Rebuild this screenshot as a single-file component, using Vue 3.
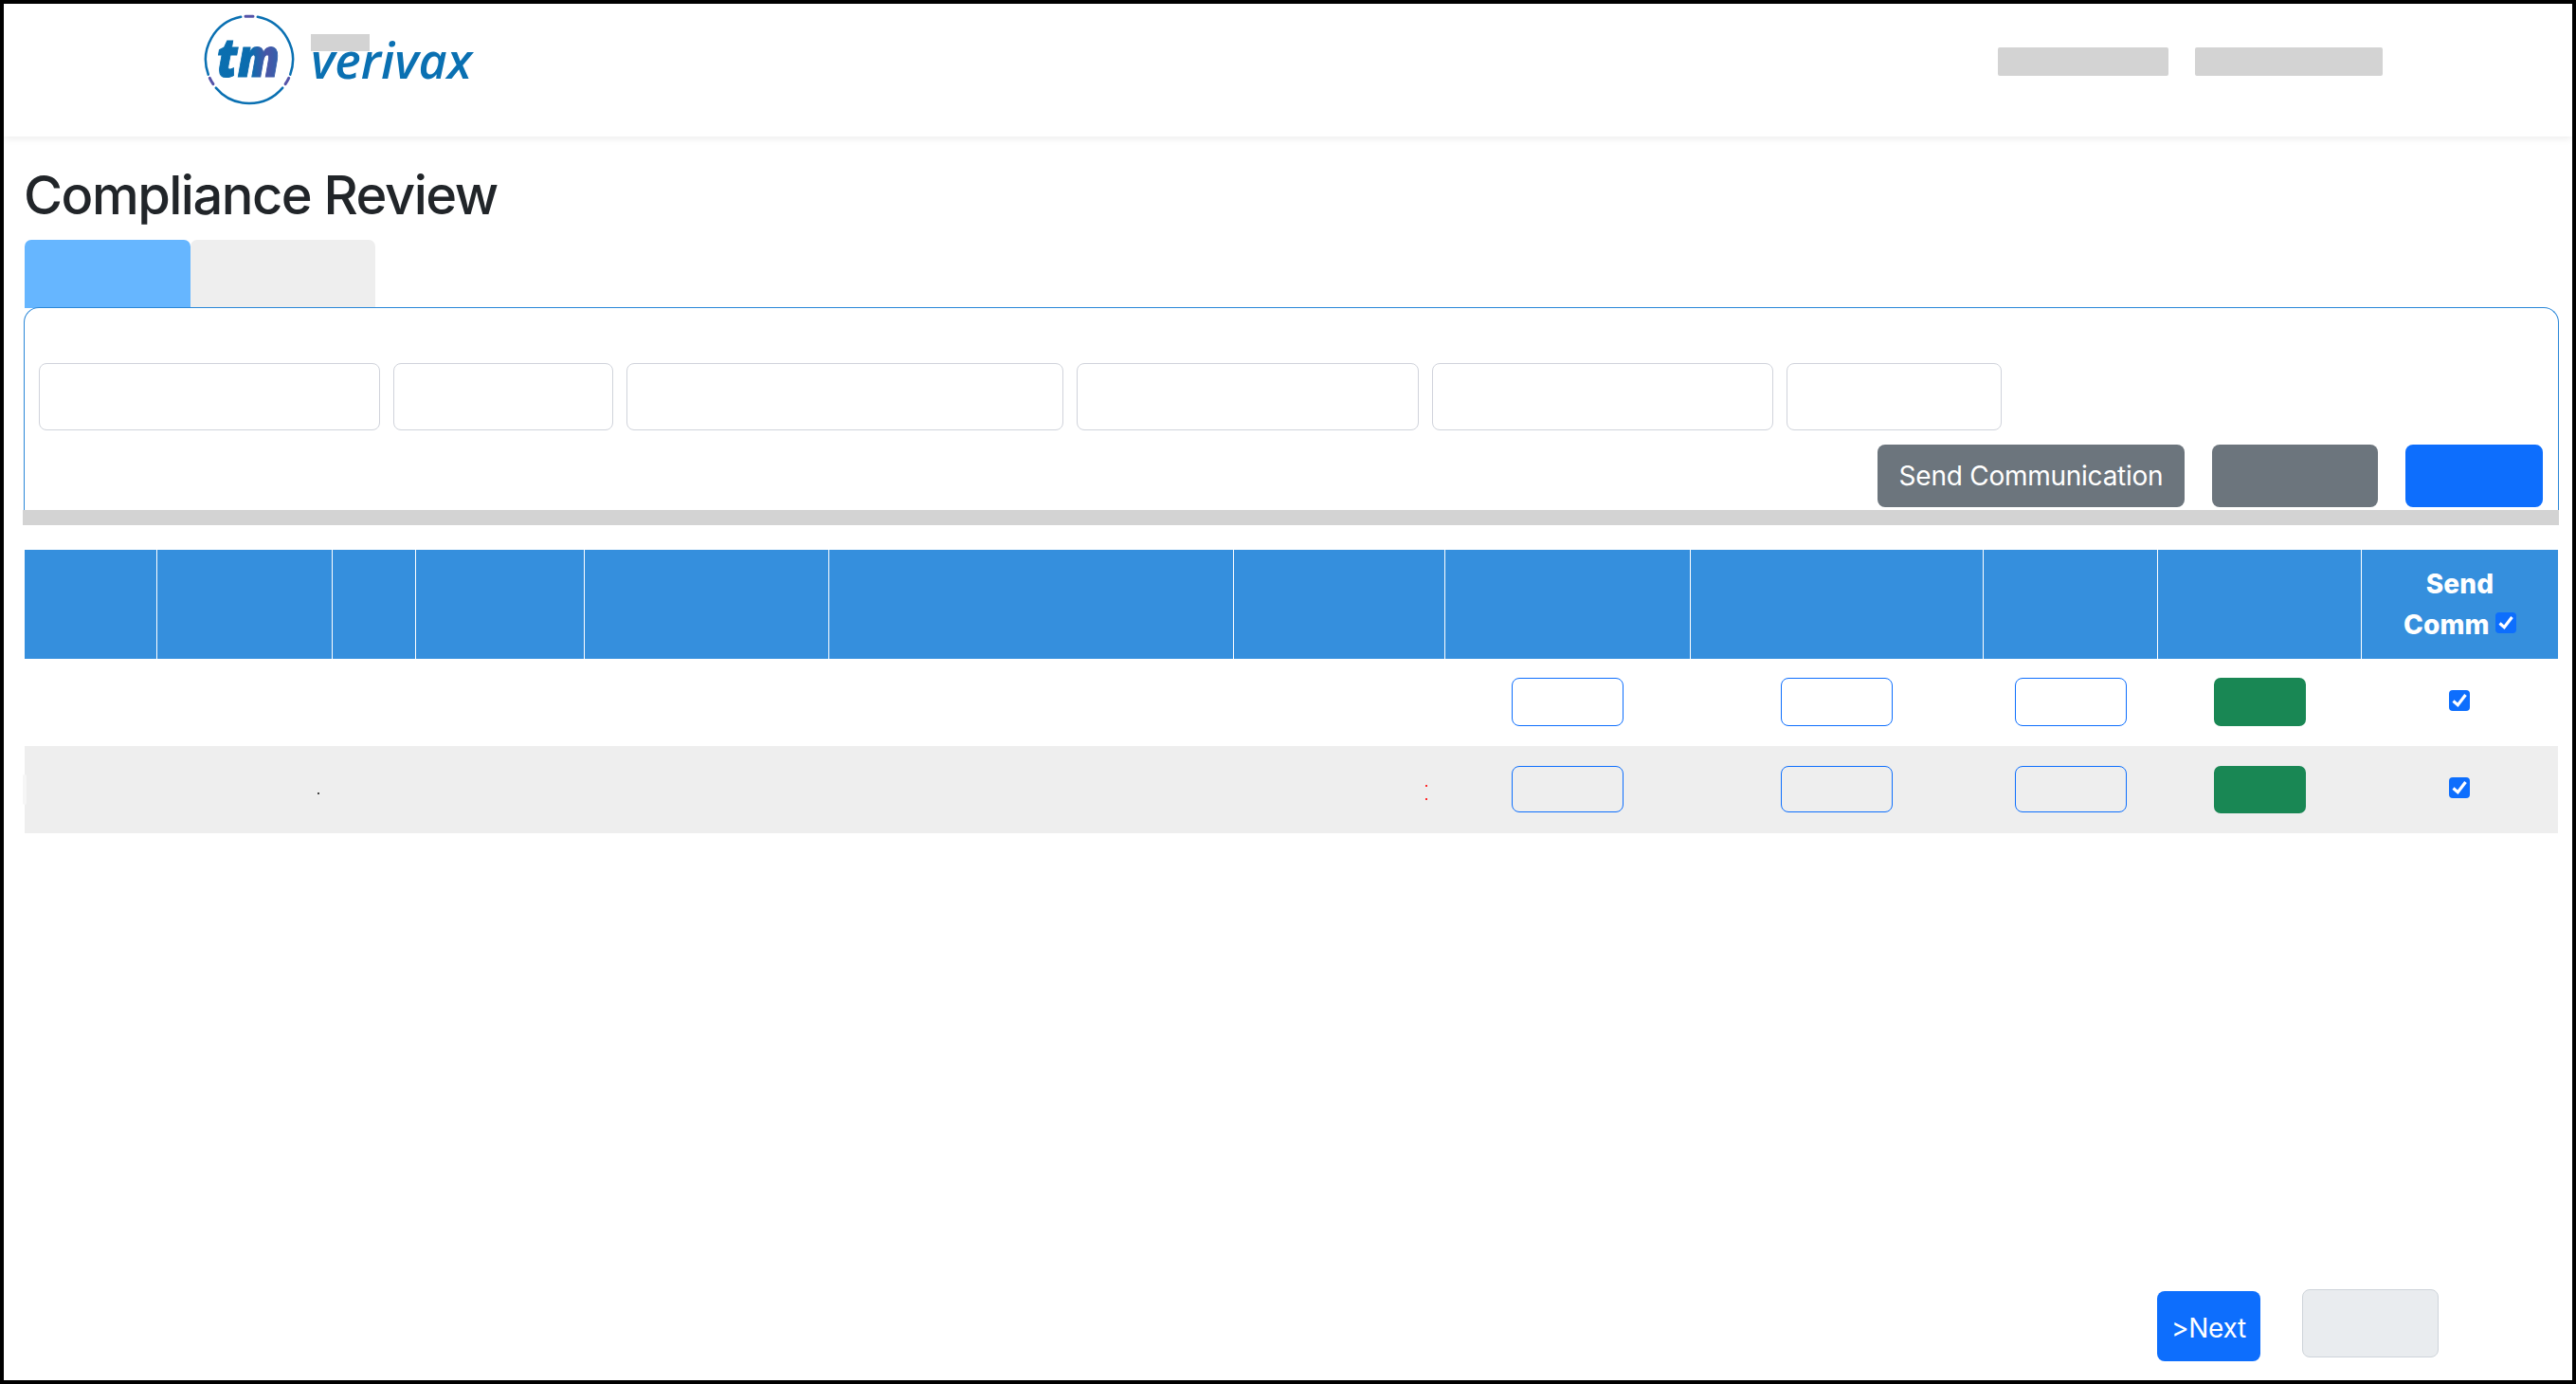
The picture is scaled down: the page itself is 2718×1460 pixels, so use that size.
<script setup>
const colWidths = [140, 185, 88, 178, 258, 427, 223, 259, 309, 184, 215, 207]
const fields = [360, 232, 461, 361, 360, 227]
const rows = [
  { id: 1, cls: 'row-a' },
  { id: 2, cls: 'row-b' }
]
</script>

<template>
  <div class="page">
    <header class="topbar">
      <div class="brand">
        <svg class="mark" viewBox="0 0 100 100" width="100" height="100" aria-hidden="true">
          <defs>
            <linearGradient id="tmfill" x1="0" y1="0" x2="1" y2="0">
              <stop offset="0" stop-color="#0a6fb0" />
              <stop offset="0.55" stop-color="#0b6cae" />
              <stop offset="0.8" stop-color="#4a55a6" />
              <stop offset="1" stop-color="#2f63ad" />
            </linearGradient>
          </defs>
          <g fill="none" stroke-width="2.5" stroke-linecap="round">
            <path stroke="#0a70b2" d="M58.8 4.8A46 46 0 0 1 93.2 65.7" />
            <path stroke="#0a70b2" d="M85.2 79.6A46 46 0 0 1 14.8 79.6" />
            <path stroke="#0a70b2" d="M6.8 65.7A46 46 0 0 1 41.2 4.8" />
            <path stroke="#5553a8" stroke-width="3" d="M46 4.3A46 46 0 0 1 54 4.3" />
            <path stroke="#5553a8" stroke-width="3" d="M91.7 69.4A46 46 0 0 1 88.1 75.7" />
            <path stroke="#5553a8" stroke-width="3" d="M11.9 75.7A46 46 0 0 1 8.3 69.4" />
          </g>
          <text class="tm" x="16" y="68" fill="url(#tmfill)" stroke="url(#tmfill)" stroke-width="1" textLength="66" lengthAdjust="spacingAndGlyphs">tm</text>
        </svg>
        <div class="wordmark">
          <span class="word">verivax</span>
          <span class="word-mask"></span>
        </div>
      </div>
      <nav class="topnav">
        <span class="nav-a"></span>
        <span class="nav-b"></span>
      </nav>
    </header>

    <main class="content">
      <h1 class="title">Compliance Review</h1>

      <div class="tabs">
        <button class="tab tab-on" type="button"></button>
        <button class="tab tab-off" type="button"></button>
      </div>

      <section class="panel">
        <div class="fields">
          <input
            v-for="(w, i) in fields"
            :key="i"
            class="field"
            type="text"
            :style="{ width: w + 'px' }"
          />
        </div>
        <div class="actions">
          <button class="btn btn-send" type="button">Send Communication</button>
          <button class="btn btn-grey" type="button"></button>
          <button class="btn btn-blue" type="button"></button>
        </div>
      </section>
      <div class="rule"></div>

      <table class="grid">
        <colgroup>
          <col v-for="(w, i) in colWidths" :key="i" :style="{ width: w + 'px' }" />
        </colgroup>
        <thead>
          <tr>
            <th v-for="n in 11" :key="n"></th>
            <th class="th-send">
              Send<br />Comm
              <span class="check check-head">
                <svg viewBox="0 0 22 22" width="22" height="22"><path d="M4.5 11.5L9.3 15.7L17.5 5" fill="none" stroke="#fff" stroke-width="3.2" /></svg>
              </span>
            </th>
          </tr>
        </thead>
        <tbody>
          <tr v-for="r in rows" :key="r.id" :class="r.cls">
            <td class="td-lead"><span v-if="r.id === 2" class="tag"></span></td>
            <td class="td-speck"><span v-if="r.id === 2" class="speck"></span></td>
            <td></td>
            <td></td>
            <td></td>
            <td></td>
            <td class="td-colon"><span v-if="r.id === 2" class="colon"></span></td>
            <td class="td-input"><input class="cell-input" type="text" /></td>
            <td class="td-input"><input class="cell-input" type="text" /></td>
            <td class="td-input"><input class="cell-input" type="text" /></td>
            <td><button class="cell-btn" type="button"></button></td>
            <td>
              <span class="check check-row">
                <svg viewBox="0 0 22 22" width="22" height="22"><path d="M4.5 11.5L9.3 15.7L17.5 5" fill="none" stroke="#fff" stroke-width="3.2" /></svg>
              </span>
            </td>
          </tr>
        </tbody>
      </table>

      <div class="pager">
        <button class="btn btn-next" type="button">&gt;Next</button>
        <button class="btn btn-prev" type="button" disabled></button>
      </div>
    </main>
  </div>
</template>

<style scoped>
.page {
  box-sizing: border-box;
  width: 2718px;
  height: 1460px;
  border: 4px solid #000;
  background: #fff;
  display: flex;
  flex-direction: column;
  font-family: Inter, "Liberation Sans", sans-serif;
  color: #212529;
  overflow: hidden;
}
.topbar {
  flex: none;
  height: 140px;
  display: flex;
  align-items: flex-start;
  box-shadow: 0 2px 8px rgba(0, 0, 0, 0.08);
  position: relative;
}
.brand {
  display: flex;
  margin-left: 209px;
  margin-top: 9px;
}
.mark {
  display: block;
}
.tm {
  font-family: "Open Sans", Lato, sans-serif;
  font-style: italic;
  font-weight: 800;
  font-size: 56px;
}
.wordmark {
  position: relative;
  margin-left: 15px;
  width: 180px;
}
.word {
  display: block;
  margin-top: 12px;
  font-family: "Open Sans", Lato, sans-serif;
  font-style: italic;
  font-weight: 600;
  font-size: 52px;
  line-height: 76px;
  color: #0a70b2;
  white-space: nowrap;
}
.word-mask {
  position: absolute;
  left: 0;
  top: 23px;
  width: 62px;
  height: 18px;
  background: #d3d3d3;
}
.topnav {
  margin-left: auto;
  margin-right: 200px;
  margin-top: 46px;
  display: flex;
  gap: 28px;
}
.nav-a,
.nav-b {
  display: block;
  height: 30px;
  background: #d3d3d3;
  border-radius: 2px;
}
.nav-a {
  width: 180px;
}
.nav-b {
  width: 198px;
}
.content {
  flex: 1;
  min-height: 0;
  display: flex;
  flex-direction: column;
  padding: 29px 14px 20px 20px;
}
.title {
  margin: 0 0 13px 1px;
  font-size: 56px;
  line-height: 67px;
  font-weight: 500;
  letter-spacing: -1.5px;
  color: #212529;
}
.tabs {
  display: flex;
  align-items: flex-start;
  margin: 0 0 -3px 2px;
  height: 74px;
}
.tab {
  display: block;
  border: 0;
  padding: 0;
  border-radius: 7px 7px 0 0;
}
.tab-on {
  width: 175px;
  height: 72px;
  background: #66b6ff;
}
.tab-off {
  width: 195px;
  height: 74px;
  background: #eeeeee;
}
.panel {
  box-sizing: border-box;
  margin-left: 1px;
  height: 214px;
  border: 1px solid #2a87d8;
  border-bottom: 0;
  border-radius: 16px 16px 0 0;
  background: #fff;
  padding: 58px 16px 0 15px;
  position: relative;
}
.fields {
  display: flex;
  gap: 14px;
}
.field {
  display: block;
  box-sizing: border-box;
  height: 71px;
  border: 1px solid #d0d3db;
  border-radius: 8px;
  background: #fff;
  padding: 0;
}
.actions {
  margin-top: 15px;
  display: flex;
  justify-content: flex-end;
  gap: 29px;
}
.btn {
  display: block;
  box-sizing: border-box;
  border: 0;
  border-radius: 8px;
  padding: 0;
  font-family: Inter, "Liberation Sans", sans-serif;
  font-size: 28px;
  line-height: 1.2;
  color: #fff;
}
.btn-send {
  width: 324px;
  height: 66px;
  padding-top: 2px;
  letter-spacing: -0.25px;
  background: #6c757d;
}
.btn-grey {
  width: 175px;
  height: 66px;
  background: #6c757d;
}
.btn-blue {
  width: 145px;
  height: 66px;
  background: #0d6efd;
}
.rule {
  height: 16px;
  background: #d3d3d3;
  flex: none;
}
.grid {
  margin: 26px 1px 0 2px;
  width: 2673px;
  table-layout: fixed;
  border-collapse: separate;
  border-spacing: 0;
}
.grid th {
  height: 115px;
  padding: 0;
  background: #358fdd;
  border-right: 1px solid #fff;
}
.grid th:last-child {
  border-right: 0;
}
.th-send {
  color: #fff;
  font-size: 28px;
  font-weight: 800;
  line-height: 43px;
  letter-spacing: 0.2px;
  text-align: center;
}
.grid td {
  padding: 0;
  text-align: center;
  vertical-align: middle;
  position: relative;
}
.grid td.td-input {
  padding-right: 1px;
}
.row-a td {
  height: 92px;
}
.row-b td {
  height: 92px;
  background: #eeeeee;
}
.cell-input {
  display: block;
  margin: 0 auto 1px;
  box-sizing: border-box;
  width: 118px;
  border: 1px solid #0d6efd;
  border-radius: 8px;
  background: transparent;
  padding: 0;
}
.row-a .cell-input {
  height: 51px;
}
.row-b .cell-input {
  height: 49px;
}
.cell-btn {
  display: block;
  margin: 0 auto;
  width: 97px;
  border: 0;
  border-radius: 7px;
  background: #198754;
}
.row-a .cell-btn {
  height: 51px;
  margin-bottom: 1px;
}
.row-b .cell-btn {
  height: 50px;
}
.check {
  display: inline-block;
  width: 22px;
  height: 22px;
  border-radius: 4px;
  background: #0d6efd;
}
.check svg {
  display: block;
}
.check-row {
  margin: 0 1px 4px 0;
  vertical-align: middle;
}
.check-head {
  vertical-align: 1px;
}
.speck {
  position: absolute;
  left: 169px;
  top: 49px;
  width: 2px;
  height: 2px;
  background: #444;
}
.colon {
  position: absolute;
  left: 202px;
  top: 41px;
  width: 2px;
  height: 2px;
  background: #ff2a2a;
  box-shadow: 0 14px 0 #ff2a2a;
}
.tag {
  position: absolute;
  left: -2px;
  top: 30px;
  width: 4px;
  height: 32px;
  border-radius: 3px;
  background: #f6f6f6;
}
.pager {
  margin-top: auto;
  display: flex;
  align-items: flex-start;
  justify-content: flex-end;
  gap: 44px;
  padding-right: 127px;
}
.btn-next {
  width: 109px;
  height: 74px;
  margin-top: 2px;
  padding-top: 6px;
  letter-spacing: -0.3px;
  background: #0d6efd;
}
.btn-prev {
  width: 144px;
  height: 72px;
  background: #e9ecef;
  border: 1px solid #ced4da;
}
</style>
